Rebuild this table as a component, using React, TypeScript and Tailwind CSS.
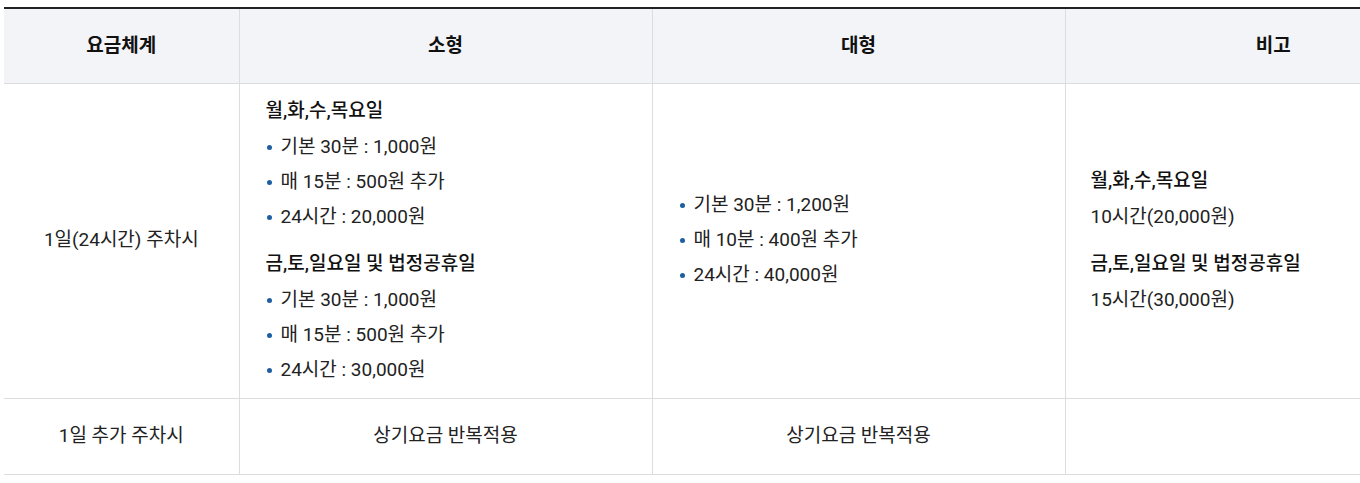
const Item = ({children}: {children: React.ReactNode}) => (
    <li className="flex items-center h-[35px]">
        <span className="w-[5px] h-[5px] rounded-full bg-[#1d5fa0] mr-[9px] ml-[1px]"/>
        <span>{children}</span>
    </li>
)

const Heading = ({children}: {children: React.ReactNode}) => (
    <p className="h-[36px] flex items-center font-medium text-[#111]">{children}</p>
)

const th = "border-l border-[#dddddd] first:border-l-0 font-semibold text-center align-middle"
const td = "border-l border-[#dddddd] first:border-l-0 align-middle"

export default function App() {
    return (
        <div className="w-[1360px] h-[483px] overflow-hidden bg-white pt-[7px] pl-[4px]"
             style={{fontFamily: 'Roboto, "Noto Sans CJK KR", sans-serif'}}>
            <table className="w-[1477px] table-fixed border-collapse text-[19px] text-[#222]">
                <colgroup>
                    <col className="w-[235px]"/>
                    <col className="w-[413px]"/>
                    <col className="w-[413px]"/>
                    <col className="w-[416px]"/>
                </colgroup>
                <thead>
                <tr className="h-[75px] bg-[#f3f4f8] border-t-2 border-[#222] border-b border-b-[#dddddd] text-[#111]">
                    <th className={th}>요금체계</th>
                    <th className={th}>소형</th>
                    <th className={th}>대형</th>
                    <th className={th}>비고</th>
                </tr>
                </thead>
                <tbody>
                <tr className="h-[315px] border-b border-[#dddddd]">
                    <td className={td + " text-center"}>1일(24시간) 주차시</td>
                    <td className={td + " px-[26px] py-[8px]"}>
                        <Heading>월,화,수,목요일</Heading>
                        <ul>
                            <Item>기본 30분 : 1,000원</Item>
                            <Item>매 15분 : 500원 추가</Item>
                            <Item>24시간 : 20,000원</Item>
                        </ul>
                        <div className="mt-[12px]"/>
                        <Heading>금,토,일요일 및 법정공휴일</Heading>
                        <ul>
                            <Item>기본 30분 : 1,000원</Item>
                            <Item>매 15분 : 500원 추가</Item>
                            <Item>24시간 : 30,000원</Item>
                        </ul>
                    </td>
                    <td className={td + " px-[26px]"}>
                        <ul>
                            <Item>기본 30분 : 1,200원</Item>
                            <Item>매 10분 : 400원 추가</Item>
                            <Item>24시간 : 40,000원</Item>
                        </ul>
                    </td>
                    <td className={td + " px-[25px]"}>
                        <Heading>월,화,수,목요일</Heading>
                        <p className="h-[35px] flex items-center">10시간(20,000원)</p>
                        <div className="mt-[12px]"/>
                        <Heading>금,토,일요일 및 법정공휴일</Heading>
                        <p className="h-[35px] flex items-center">15시간(30,000원)</p>
                    </td>
                </tr>
                <tr className="h-[76px] border-b border-[#dddddd]">
                    <td className={td + " text-center"}>1일 추가 주차시</td>
                    <td className={td + " text-center"}>상기요금 반복적용</td>
                    <td className={td + " text-center"}>상기요금 반복적용</td>
                    <td className={td}></td>
                </tr>
                </tbody>
            </table>
        </div>
    );
}
